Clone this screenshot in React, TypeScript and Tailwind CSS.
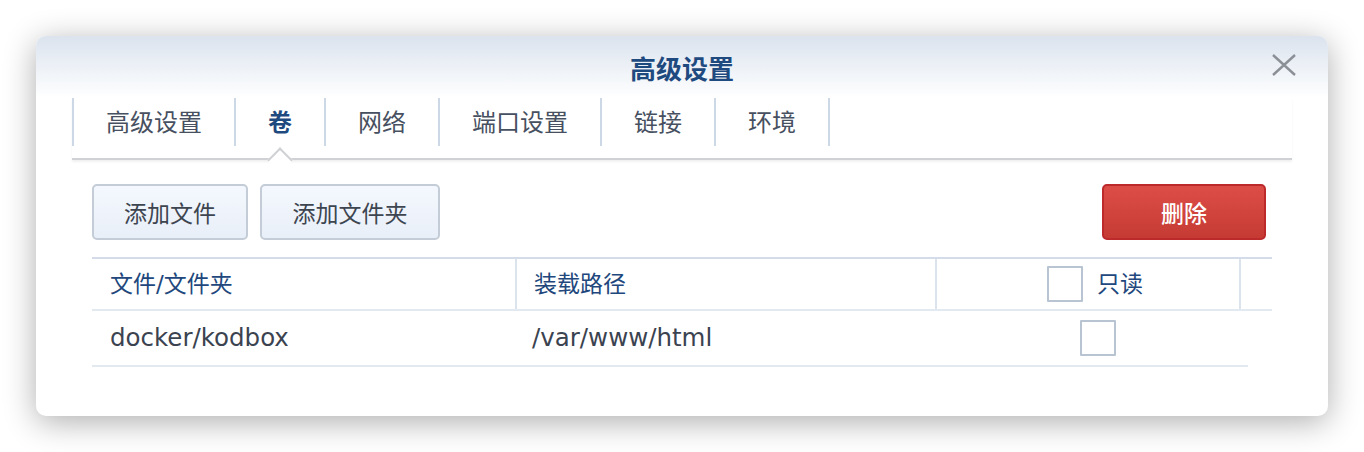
import React from "react";

const tabs = ["高级设置", "卷", "网络", "端口设置", "链接", "环境"];
const activeTab = 1;

const CheckBox = () => (
    <div className="w-[36px] h-[36px] border-2 border-[#b9c4d2] bg-white rounded-[1px]"></div>
);

export default function App() {
    return (
        <div className="w-[1364px] h-[452px] bg-white pt-[36px] pl-[36px] font-['DejaVu_Sans','Noto_Sans_CJK_SC',sans-serif]">
            <div className="w-[1292px] h-[380px] bg-white rounded-[10px] shadow-[0_6px_32px_rgba(0,0,0,0.32)] overflow-hidden">
                {/* header */}
                <div className="relative h-[62px] bg-gradient-to-b from-[#dbe3ee] to-white flex items-center justify-center">
                    <span className="text-[26px] font-bold text-[#1f4a80] font-['Noto_Sans_CJK_SC',sans-serif]">高级设置</span>
                    <button type="button" className="absolute right-[32px] top-[18px] w-[24px] h-[22px] flex items-center justify-center">
                        <svg width="24" height="22" viewBox="0 0 24 22">
                            <path d="M1 1 L23 21 M23 1 L1 21" stroke="#8b9097" strokeWidth="2.4" fill="none"/>
                        </svg>
                    </button>
                </div>

                {/* tabs */}
                <div className="mx-[36px] pb-[12px] border-b-2 border-[#cfd1d4] shadow-[0_2px_2px_rgba(0,0,0,0.06)] relative">
                    <div className="flex h-[48px]">
                        {tabs.map((t, i) => (
                            <div key={t} className={"relative flex items-center pb-[3px] px-[32px] border-l-2 border-[#cdd8e6] text-[24px] font-['Noto_Sans_CJK_SC',sans-serif] " + (i === tabs.length - 1 ? "border-r-2 " : "") + (i === activeTab ? "font-bold text-[#1f4a80]" : "text-[#475060]")}>
                                {t}
                                {i === activeTab && (
                                    <div className="absolute left-1/2 -translate-x-1/2 bottom-[-23px] w-[18px] h-[18px] rotate-45 bg-white border-l-2 border-t-2 border-[#cfd1d4]"></div>
                                )}
                            </div>
                        ))}
                    </div>
                </div>

                {/* content */}
                <div className="px-[56px] pt-[24px]">
                    <div className="flex items-center">
                        <button type="button" className="w-[156px] h-[56px] rounded-[5px] border-2 border-[#c3ccd7] bg-gradient-to-b from-[#f4f8fe] to-[#e9eff8] text-[23px] text-[#3d4550] font-['Noto_Sans_CJK_SC',sans-serif]">添加文件</button>
                        <button type="button" className="ml-[12px] w-[180px] h-[56px] rounded-[5px] border-2 border-[#c3ccd7] bg-gradient-to-b from-[#f4f8fe] to-[#e9eff8] text-[23px] text-[#3d4550] font-['Noto_Sans_CJK_SC',sans-serif]">添加文件夹</button>
                        <button type="button" className="ml-auto mr-[6px] w-[164px] h-[56px] rounded-[5px] border-2 border-[#bd2a2c] bg-gradient-to-b from-[#dd4d47] to-[#c53b34] text-[23px] text-white font-medium font-['Noto_Sans_CJK_SC',sans-serif]">删除</button>
                    </div>

                    {/* table */}
                    <div className="mt-[17px]">
                        <div className="grid grid-cols-[423px_420px_304px_33px] h-[54px] border-t-2 border-b-2 border-t-[#d3dce8] border-b-[#e3e9f1] text-[23px] text-[#21477c]">
                            <div className="flex items-center pl-[18px]">文件/文件夹</div>
                            <div className="flex items-center pl-[17px] border-l-2 border-[#dbe3ed]">装载路径</div>
                            <div className="flex items-center justify-center gap-[14px] pl-[14px] border-l-2 border-[#dbe3ed]">
                                <CheckBox/>
                                <span>只读</span>
                            </div>
                            <div className="border-l-2 border-[#dbe3ed]"></div>
                        </div>
                        <div className="grid grid-cols-[423px_420px_313px] w-[1156px] h-[56px] border-b-2 border-[#e3e9f1] text-[24.5px] text-[#3b4350]">
                            <div className="flex items-center pl-[18px]">docker/kodbox</div>
                            <div className="flex items-center pl-[17px]">/var/www/html</div>
                            <div className="flex items-center justify-center pl-[13px]">
                                <CheckBox/>
                            </div>
                        </div>
                    </div>
                </div>
            </div>
        </div>
    );
}
